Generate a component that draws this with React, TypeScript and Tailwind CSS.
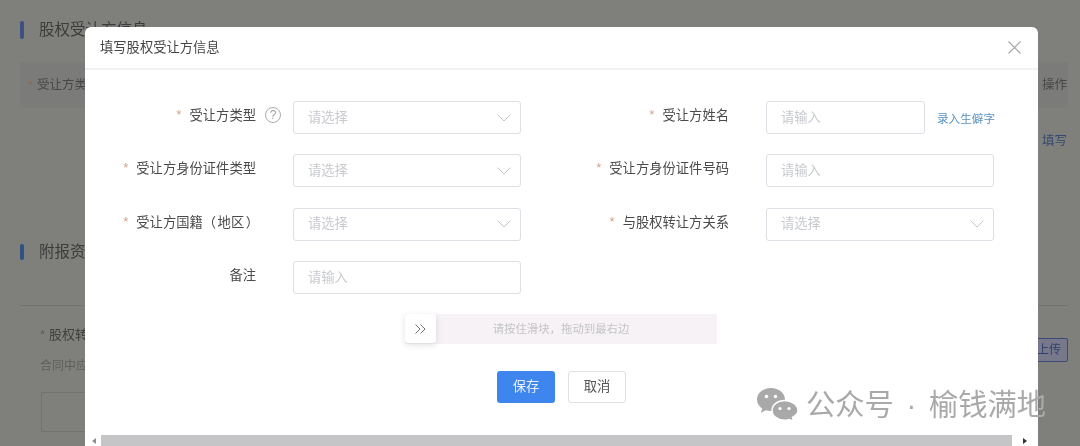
const cjk = 'font-["Liberation_Sans","Noto_Sans_CJK_SC",sans-serif]';

function Chevron() {
  return (
    <svg width="14" height="8" viewBox="0 0 14 8" fill="none" stroke="#c4c6cb" strokeWidth="1">
      <path d="M0.5 0.5 L7 7 L13.5 0.5" />
    </svg>
  );
}

function Field({ placeholder, select, className }: { placeholder: string; select?: boolean; className?: string }) {
  return (
    <div className={`h-[33px] flex items-center justify-between rounded-[3px] border border-[#dcdfe4] bg-white pl-[14px] pr-[9px] text-[13.3px] text-[#c8cacf] ${className ?? 'w-[228px]'}`}>
      <span>{placeholder}</span>
      {select && <Chevron />}
    </div>
  );
}

function Label({ text, required, children }: { text: React.ReactNode; required?: boolean; children?: React.ReactNode }) {
  return (
    <>
      <div className="w-[171px] shrink-0 flex justify-end items-start h-[33px] pt-[5px] text-[13.3px] text-[#4a4a4a]">
        {required && <span className="mr-[8px] -mt-[1px] text-[#d3a28c]">*</span>}
        <span>{text}</span>
      </div>
      <div className="w-[37px] shrink-0 h-[33px] flex items-start pt-[6px] pl-[9px]">{children}</div>
    </>
  );
}

function Row({ label, required, children, extra }: { label: React.ReactNode; required?: boolean; children: React.ReactNode; extra?: React.ReactNode }) {
  return (
    <div className="flex items-start">
      <Label text={label} required={required}>{extra}</Label>
      {children}
    </div>
  );
}

function Background() {
  return (
    <div className="h-full pt-[20px] pl-[20px] pr-[12px] flex flex-col text-[#3b3c3b]">
      <div className="flex items-center h-[19px]">
        <div className="w-[4px] h-[18px] rounded-sm bg-[#3e4f85]" />
        <div className="ml-[15px] text-[15.5px]">股权受让方信息</div>
      </div>
      <div className="mt-[23px] h-[46px] pl-[8px] bg-[#7b7b7a] flex items-center justify-between text-[12.5px] text-[#474846]">
        <span><span className="text-[#8f6a5c] mr-[4px]">*</span>受让方类</span>
        <span className="mr-[1px]">操作</span>
      </div>
      <div className="h-[121px] pt-[24px] pr-[1px] flex justify-end text-[12.5px] text-[#34496f]">
        <span>填写</span>
      </div>
      <div className="mt-[13px] flex items-center h-[19px]">
        <div className="w-[4px] h-[16px] rounded-sm bg-[#2f5183]" />
        <div className="ml-[15px] text-[15.5px]">附报资</div>
      </div>
      <div className="mt-[44px] border-t border-[#737471] h-[20px]" />
      <div className="flex items-start justify-between pl-[20px] h-[37px]">
        <span className="text-[13px] text-[#3f403e]"><span className="text-[#5d5e5c] mr-[4px]">*</span>股权转</span>
        <span className="mt-[13px] h-[24px] px-[6px] rounded-[2px] border border-[#3d4a78] bg-[#77798a] text-[12px] text-[#33406f] leading-[22px]">上传</span>
      </div>
      <div className="-mt-[5px] pl-[20px] text-[12px] text-[#5e5f5d]">合同中应</div>
      <div className="mt-[17px] ml-[21px] w-[60px] h-[40px] border border-[#737471]" />
    </div>
  );
}

function Modal() {
  return (
    <div className="absolute left-[85px] top-[27px] w-[953px] h-[419px] bg-white rounded-t-[6px] flex flex-col">
      <div className="h-[43px] shrink-0 flex items-center justify-between pl-[15px] pr-[17px] border-b-2 border-[#f2f2f2] text-[13.3px] text-[#444]">
        <span>填写股权受让方信息</span>
        <svg width="13" height="13" viewBox="0 0 13 13" stroke="#a3a5a7" strokeWidth="1.1" fill="none">
          <path d="M0.5 0.5 L12.5 12.5 M12.5 0.5 L0.5 12.5" />
        </svg>
      </div>

      <div className="flex-1 flex flex-col">
        <div className="grid grid-cols-[473px_473px] gap-y-[20.4px] pt-[31px]">
          <Row
            label="受让方类型"
            required
            extra={
              <span className="w-[16px] h-[16px] rounded-full border border-[#a9abad] flex items-center justify-center text-[12px] leading-none text-[#a0a2a4]">?</span>
            }
          >
            <Field placeholder="请选择" select />
          </Row>
          <Row label="受让方姓名" required>
            <Field placeholder="请输入" className="w-[159px]" />
            <span className="ml-[12px] pt-[9px] text-[11.6px] text-[#5a93c4]">录入生僻字</span>
          </Row>
          <Row label="受让方身份证件类型" required>
            <Field placeholder="请选择" select />
          </Row>
          <Row label="受让方身份证件号码" required>
            <Field placeholder="请输入" />
          </Row>
          <Row
            label={
              <span className="-mr-[3px] inline-block">
                受让方国籍（<span className="mx-[1.5px]">地区</span>）
              </span>
            }
            required
          >
            <Field placeholder="请选择" select />
          </Row>
          <Row label="与股权转让方关系" required>
            <Field placeholder="请选择" select />
          </Row>
          <Row label="备注">
            <Field placeholder="请输入" />
          </Row>
        </div>

        <div className="mt-[20px] ml-[320px] w-[312px] h-[30px] flex bg-[#f6f2f5]">
          <div className="w-[31px] h-[29px] shrink-0 flex items-center justify-center rounded-[3px] bg-white shadow-[0_2px_6px_rgba(0,0,0,0.12)]">
            <svg width="11" height="10" viewBox="0 0 11 10" fill="none" stroke="#6f7173" strokeWidth="1">
              <path d="M0.5 0.5 L5 5 L0.5 9.5 M5.5 0.5 L10 5 L5.5 9.5" />
            </svg>
          </div>
          <div className="flex-1 flex items-center justify-center pr-[31px] text-[11.4px] text-[#c3c4c8]">请按住滑块，拖动到最右边</div>
        </div>

        <div className="mt-[27px] ml-[412px] flex gap-[13px]">
          <button className="w-[58px] h-[32px] rounded-[3px] bg-[#3f85ee] text-[13.3px] text-[#e8f0fd]">保存</button>
          <button className="w-[58px] h-[32px] rounded-[3px] border border-[#dcdfe4] bg-white text-[13.3px] text-[#555]">取消</button>
        </div>
      </div>

      <div className="h-[11px] shrink-0 flex items-center">
        <div className="w-[16px] flex justify-center pl-[2px]">
          <span className="border-y-[3px] border-y-transparent border-r-[4px] border-r-[#8f8f8f]" />
        </div>
        <div className="h-full w-[911px] bg-[#c5c4c6]" />
        <div className="flex-1 flex justify-center">
          <span className="border-y-[3px] border-y-transparent border-l-[4px] border-l-[#333]" />
        </div>
      </div>
    </div>
  );
}

function Watermark() {
  return (
    <div className="absolute left-[757px] top-[388px] flex items-center text-[#a9a9a9]">
      <svg width="41" height="33" viewBox="0 0 41 33">
        <path d="M14 0 C6.3 0 0 5 0 11.5 C0 15.2 2 18.3 5.2 20.4 L3.8 24.8 L8.8 22.2 C10.5 22.7 12.2 23 14 23 C21.7 23 28 17.9 28 11.5 C28 5 21.7 0 14 0 Z" fill="#a9a9a9" />
        <path d="M27.5 12.5 C20.5 12.5 15 17 15 22.4 C15 27.9 20.5 32.2 27.5 32.2 C29 32.2 30.4 32 31.7 31.6 L36.6 33 L35.5 29.3 C38.9 27.5 41 25.1 41 22.4 C41 17 34.5 12.5 27.5 12.5 Z" fill="#a9a9a9" stroke="white" strokeWidth="1.5" />
        <circle cx="9.5" cy="8.5" r="1.8" fill="white" />
        <circle cx="18.5" cy="8.5" r="1.8" fill="white" />
        <circle cx="23" cy="20.5" r="1.6" fill="white" />
        <circle cx="32" cy="20.5" r="1.6" fill="white" />
      </svg>
      <div className="ml-[8px] flex whitespace-nowrap text-[29.3px] leading-none">
        <span>公众号</span>
        <span className="w-[35px] text-center">·</span>
        <span>榆钱满地</span>
      </div>
    </div>
  );
}

export default function App() {
  return (
    <div className={`relative w-[1080px] h-[446px] overflow-hidden bg-[#7f807c] blur-[0.35px] ${cjk}`}>
      <Background />
      <Modal />
      <Watermark />
    </div>
  );
}
